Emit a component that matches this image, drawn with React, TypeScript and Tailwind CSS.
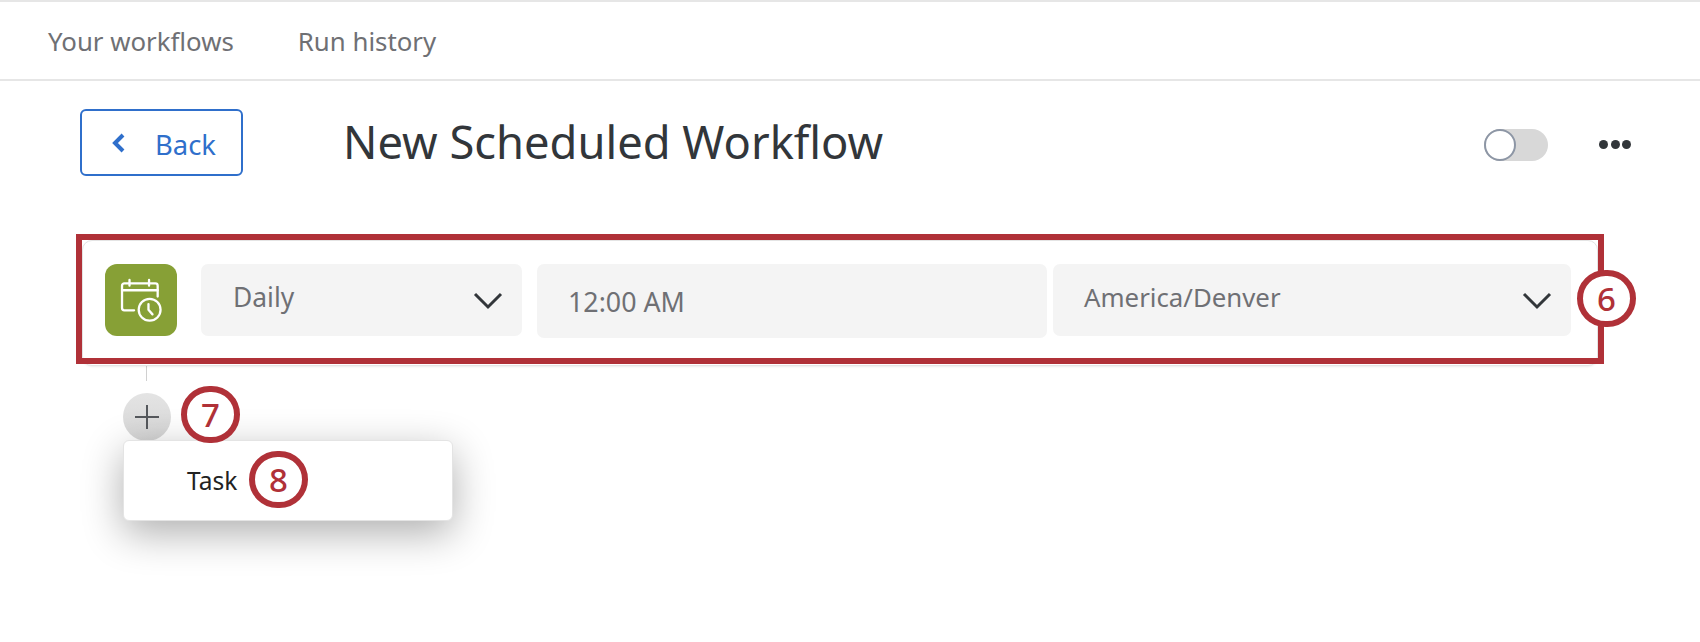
// numbered callout laid over the screenshot
function Badge({ n, className }: { n: number; className: string }) {
  return (
    <div
      className={`absolute flex h-[57px] w-[59px] items-center justify-center rounded-full border-[6px] border-[#b03138] bg-white text-[33px] font-medium leading-none text-[#b03138] ${className}`}
    >
      {n}
    </div>
  );
}

function Chevron() {
  return (
    <svg width="30" height="18" viewBox="0 0 30 18" fill="none" stroke="#32363a" strokeWidth="3" className="mt-[6px]">
      <path d="M2 2l13 13L28 2" />
    </svg>
  );
}

function ScheduleIcon() {
  return (
    <svg width="46" height="46" viewBox="0 0 40 40" fill="none" stroke="#fff" strokeWidth="2" strokeLinecap="round" strokeLinejoin="round">
      <path d="M14 29H5.5a2 2 0 0 1-2-2V7.5a2 2 0 0 1 2-2h27a2 2 0 0 1 2 2V17" />
      <path d="M3.5 11.5h31" />
      <path d="M10 2.5v5M27 2.5v5" />
      <circle cx="27.5" cy="28.5" r="9.5" />
      <path d="M26.5 23.5v5l3.5 4" />
    </svg>
  );
}

export default function App() {
  return (
    <div className="relative h-[642px] w-[1700px] overflow-hidden bg-white font-['Noto_Sans',sans-serif]">
      {/* Tabs */}
      <div className="flex h-[81px] items-center gap-[64px] border-y-2 border-[#e6e6e6] pl-[48px] pt-[2px] text-[25.8px] text-[#6f7074]">
        <span>Your workflows</span>
        <span>Run history</span>
      </div>

      {/* Title row */}
      <div className="mt-[28px] flex h-[67px] items-center pl-[80px]">
        <button className="flex h-[67px] w-[163px] items-center rounded-[6px] border-2 border-[#2f6fcb] pl-[29px] pt-[5px] text-[27.4px] text-[#2f6fcb]">
          <svg width="16" height="22" viewBox="0 0 16 22" fill="none" stroke="currentColor" strokeWidth="4" className="-mt-[4px]">
            <path d="M12 3 4 11l8 8" />
          </svg>
          <span className="ml-[28px]">Back</span>
        </button>
        <h1 className="-mt-[2px] ml-[100px] text-[45.3px] leading-none text-[#32363a]">New Scheduled Workflow</h1>
        <div className="ml-auto mt-[4px] flex items-center">
          <div className="flex h-[32px] w-[64px] rounded-full bg-[#d8d8d8]">
            <div className="h-[32px] w-[32px] rounded-full border-2 border-[#8d96a5] bg-white" />
          </div>
          <div className="ml-[51px] mr-[69px] flex gap-[2.5px]">
            <span className="h-[9px] w-[9px] rounded-full bg-[#32363a]" />
            <span className="h-[9px] w-[9px] rounded-full bg-[#32363a]" />
            <span className="h-[9px] w-[9px] rounded-full bg-[#32363a]" />
          </div>
        </div>
      </div>

      {/* Trigger card, with the red highlight frame over it */}
      <div className="relative ml-[82px] mt-[64px] h-[126px] w-[1516px] rounded-[10px] border border-[#e4e4e4] bg-white shadow-[0_1px_2px_rgba(0,0,0,0.08)]">
        <div className="flex items-start pl-[22px] pt-[23px] text-[25.8px] text-[#6f7074]">
          <div className="flex h-[72px] w-[72px] items-center justify-center rounded-[12px] bg-[#87a036]">
            <ScheduleIcon />
          </div>
          <div className="ml-[24px] flex h-[72px] w-[321px] items-center justify-between rounded-[7px] bg-[#f4f4f4] pb-[5px] pl-[32px] pr-[19px]">
            <span className="text-[26.4px]">Daily</span>
            <Chevron />
          </div>
          <div className="ml-[15px] flex h-[74px] w-[510px] items-center rounded-[7px] bg-[#f4f4f4] pl-[31px] pt-[3px]">
            <span className="text-[26.8px]">12:00 AM</span>
          </div>
          <div className="ml-[6px] flex h-[72px] w-[518px] items-center justify-between rounded-[7px] bg-[#f4f4f4] pb-[5px] pl-[31px] pr-[19px]">
            <span>America/Denver</span>
            <Chevron />
          </div>
        </div>
        <div className="pointer-events-none absolute -left-[7px] -top-[7px] h-[130px] w-[1528px] border-[6px] border-[#b03138]" />
      </div>

      {/* Add step */}
      <div className="flex flex-col pl-[123px]">
        <div className="ml-[23px] h-[15px] w-[1px] bg-[#d0d0d0]" />
        <div className="mt-[12px] flex h-[48px] w-[48px] items-center justify-center rounded-full bg-gradient-to-b from-[#e4e4e4] to-[#d6d6d6]">
          <svg width="26" height="26" viewBox="0 0 26 26" stroke="#55585c" strokeWidth="2">
            <path d="M13 1v24M1 13h24" />
          </svg>
        </div>
        <div className="-mt-[1px] flex h-[81px] w-[330px] items-center rounded-[6px] border border-[#e4e4e4] bg-white pl-[63px] pt-[2px] text-[24.5px] text-[#222] shadow-[0_12px_40px_rgba(0,0,0,0.32)]">
          Task
        </div>
      </div>

      <Badge n={6} className="left-[1577px] top-[270px]" />
      <Badge n={7} className="left-[181px] top-[386px]" />
      <Badge n={8} className="left-[249px] top-[451px]" />
    </div>
  );
}
